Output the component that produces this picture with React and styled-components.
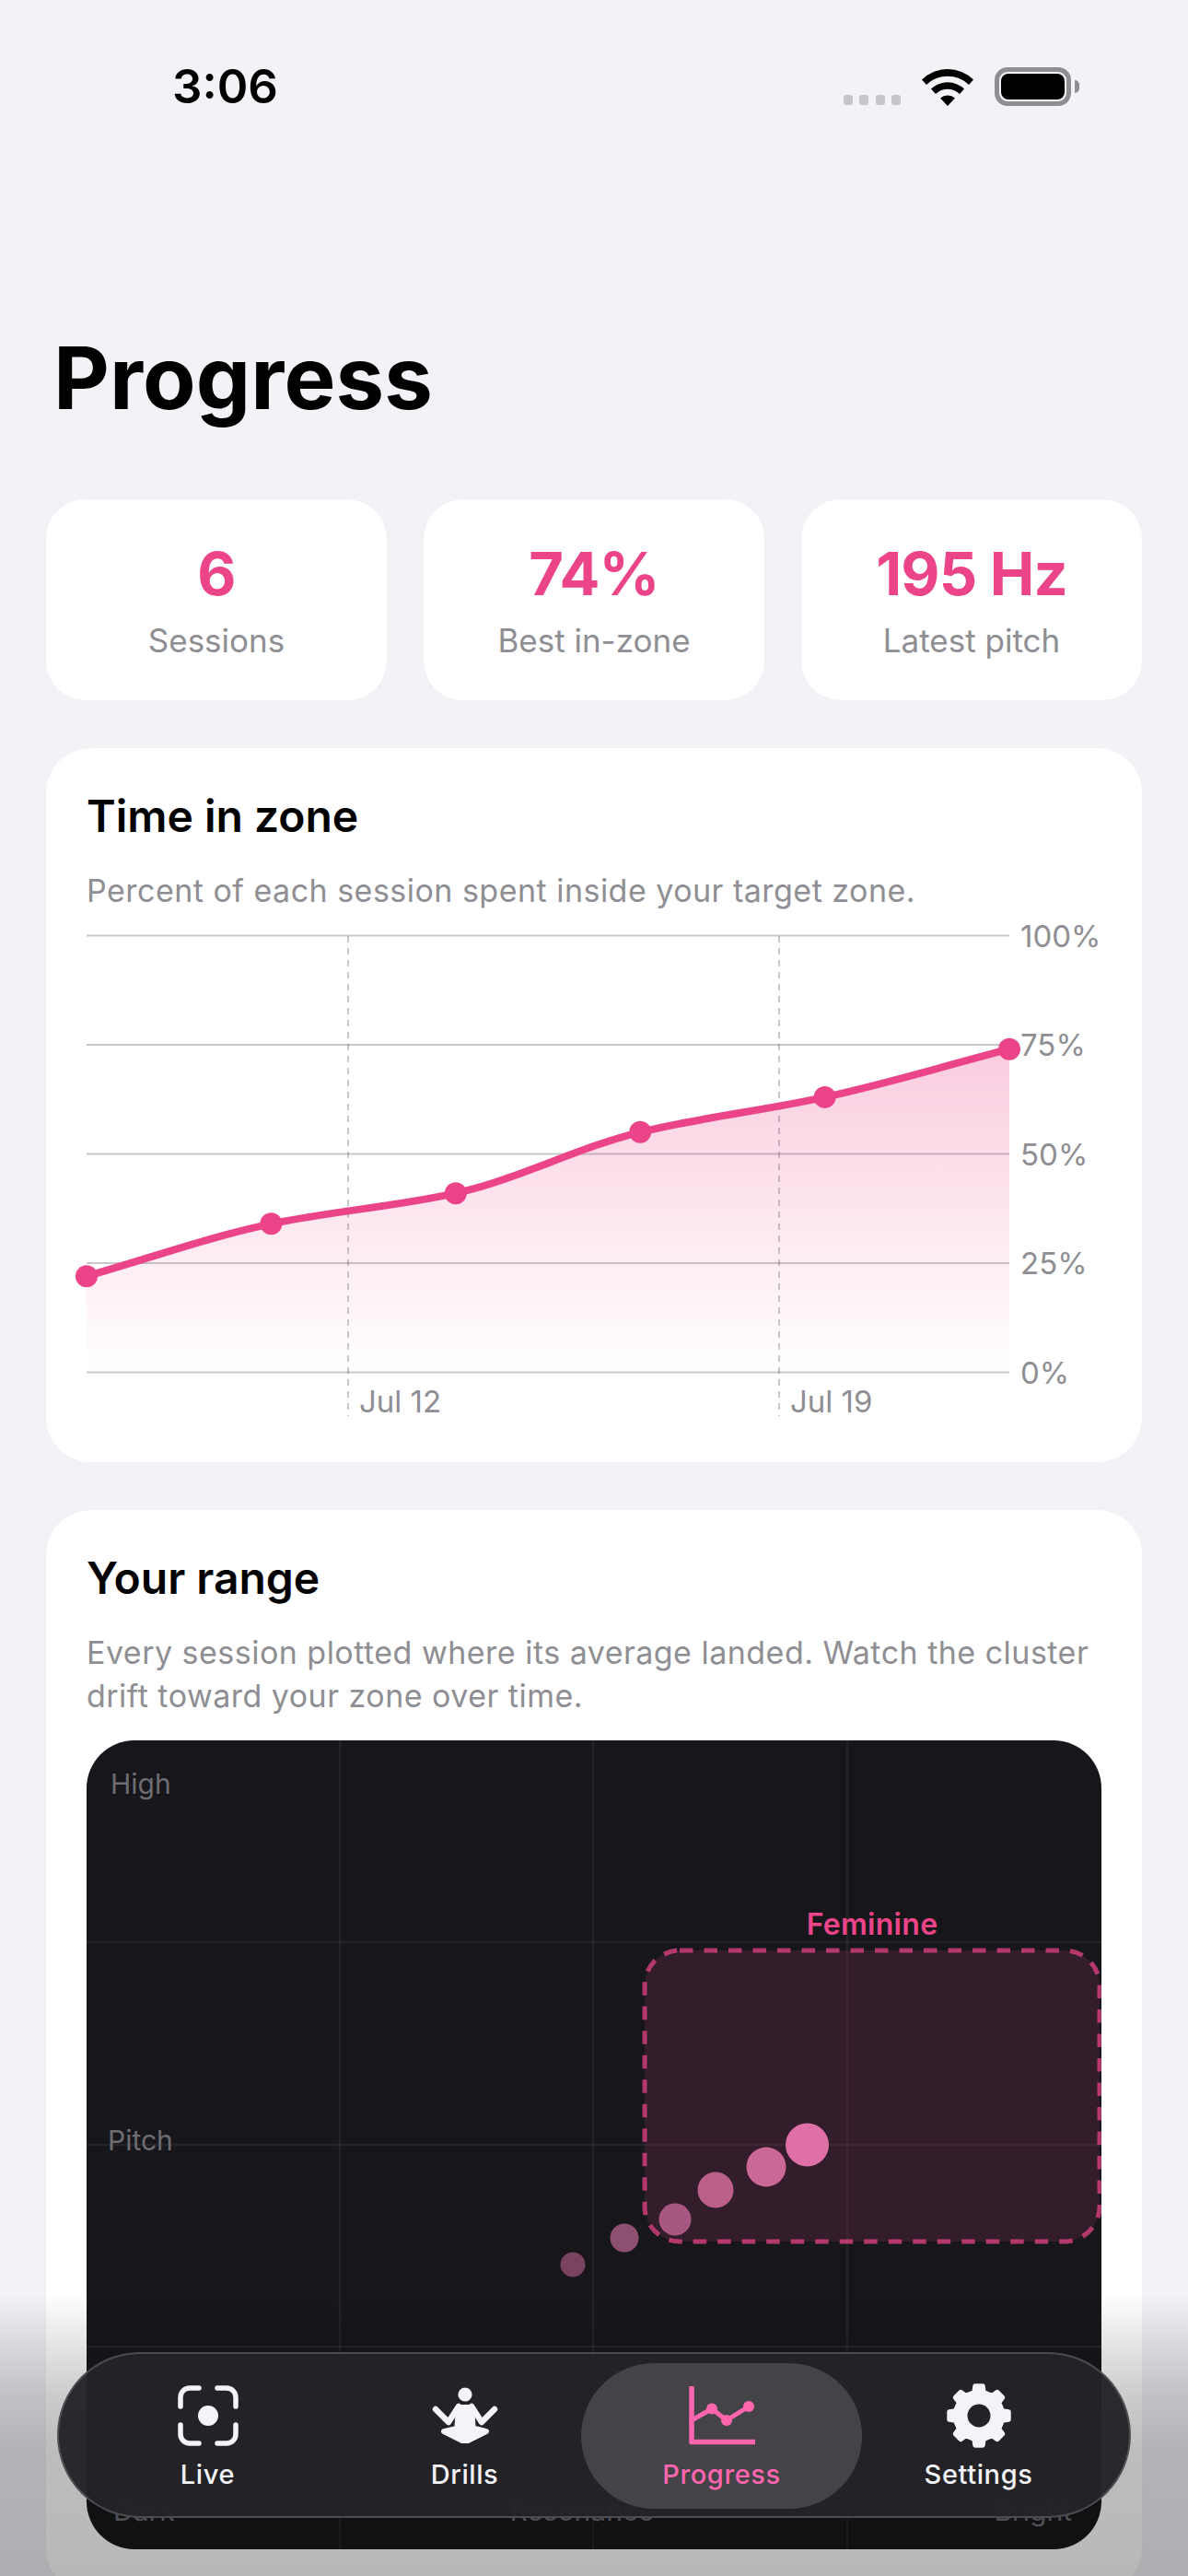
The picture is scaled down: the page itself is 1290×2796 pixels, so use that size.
import React from "react";
import styled, { createGlobalStyle } from "styled-components";

const Global = createGlobalStyle`
  html, body { margin: 0; padding: 0; background: #f2f2f7; }
  body { font-family: Inter, "Noto Sans", sans-serif; -webkit-font-smoothing: antialiased; }
`;

const Screen = styled.div`
  position: relative;
  width: 1290px;
  height: 2796px;
  overflow: hidden;
  background: #f2f2f7;
  box-sizing: border-box;
`;
const StatusBar = styled.div`
  display: flex;
  justify-content: space-between;
  align-items: flex-start;
  height: 180px;
  padding: 64px 127px 0 187px;
  box-sizing: border-box;
`;
const Clock = styled.div`
  font-size: 51px;
  font-weight: 600;
  line-height: 60px;
  color: #000;
`;
const StatusIcons = styled.div`
  display: flex;
  align-items: flex-end;
  padding-top: 9px;
  gap: 23px;
`;
const Signal = styled.div`
  display: flex;
  gap: 7.5px;
  margin-bottom: 1px;
`;
const SignalDot = styled.span`
  width: 10px;
  height: 11px;
  border-radius: 3px;
  background: #c5c5ca;
`;
const Battery = styled.div`
  position: relative;
  width: 83px;
  height: 42px;
  box-sizing: border-box;
  border: 5px solid #8e8e93;
  border-radius: 14px;
  padding: 2px;
  &::after {
    content: "";
    position: absolute;
    right: -14px;
    top: 9px;
    width: 5px;
    height: 14px;
    background: #8e8e93;
    border-radius: 0 5px 5px 0;
  }
`;
const BatteryFill = styled.div`
  width: 100%;
  height: 100%;
  background: #000;
  border-radius: 8px;
`;
const PageTitle = styled.h1`
  margin: 174px 0 0;
  padding: 0 0 0 58px;
  font-size: 94px;
  line-height: 112px;
  font-weight: 700;
  letter-spacing: 0.1px;
  color: #000;
`;
const StatsRow = styled.div`
  display: grid;
  grid-template-columns: repeat(3, 370px);
  gap: 40px;
  padding: 0 50px;
  margin-top: 76px;
`;
const StatCard = styled.div`
  display: flex;
  flex-direction: column;
  align-items: center;
  height: 218px;
  box-sizing: border-box;
  padding-top: 42px;
  background: #fff;
  border-radius: 42px;
  box-shadow: 0 0 2px rgba(0, 0, 0, 0.04);
`;
const StatValue = styled.div`
  font-size: 65px;
  line-height: 78px;
  font-weight: 700;
  letter-spacing: -0.9px;
  color: #ec4488;
`;
const StatLabel = styled.div`
  margin-top: 11px;
  font-size: 35px;
  line-height: 44px;
  color: #8e8e93;
`;
const Card = styled.section`
  margin: 52px 50px 0;
  padding: 45px 44px 47px;
  background: #fff;
  border-radius: 48px;
  box-shadow: 0 0 2px rgba(0, 0, 0, 0.04);
`;
const CardTitle = styled.h2`
  margin: 0;
  font-size: 48px;
  line-height: 58px;
  font-weight: 600;
  color: #000;
`;
const CardSub = styled.p`
  margin: 28px 0 0;
  font-size: 34px;
  line-height: 47px;
  letter-spacing: 0.48px;
  color: #8e8e93;
`;
const ChartSvg = styled.svg`
  display: block;
  overflow: visible;
  margin-top: 10px;
`;
const AxisText = styled.text`
  font-family: Inter, sans-serif;
  font-size: 33px;
  fill: #8e8e93;
`;
const RangePlot = styled.div`
  margin-top: 25px;
  height: 878px;
  overflow: hidden;
  border-radius: 52px;
  background: #17171b;
`;
const RangeSvg = styled.svg`
  display: block;
`;
const PlotText = styled.text`
  font-family: Inter, sans-serif;
  font-size: 30px;
  fill: #6c6c71;
`;
const ZoneText = styled.text`
  font-family: Inter, sans-serif;
  font-size: 32px;
  font-weight: 600;
  letter-spacing: 0.3px;
  fill: #ec4488;
`;
const Fade = styled.div`
  position: absolute;
  left: 0;
  right: 0;
  bottom: 0;
  height: 306px;
  pointer-events: none;
  background: linear-gradient(
    to bottom,
    rgba(0, 0, 0, 0) 0,
    rgba(0, 0, 0, 0.08) 40px,
    rgba(0, 0, 0, 0.2) 110px,
    rgba(0, 0, 0, 0.26) 170px,
    rgba(0, 0, 0, 0.28) 306px
  );
`;
const TabBar = styled.nav`
  position: absolute;
  left: 62px;
  top: 2553px;
  width: 1166px;
  height: 180px;
  box-sizing: border-box;
  padding: 0 22px;
  display: grid;
  grid-template-columns: repeat(4, 279px);
  background: rgba(36, 36, 40, 0.97);
  border: 2px solid rgba(150, 150, 158, 0.34);
  border-radius: 90px;
`;
const Tab = styled.div`
  position: relative;
  display: flex;
  flex-direction: column;
  align-items: center;
  font-size: 29px;
  font-weight: 500;
  letter-spacing: 0.6px;
  color: ${(p) => (p.$active ? "#ff66ad" : "#f4f4f8")};
  &::before {
    content: "";
    display: ${(p) => (p.$active ? "block" : "none")};
    position: absolute;
    left: -13px;
    right: -13px;
    top: 10px;
    height: 158px;
    border-radius: 79px;
    background: #434348;
  }
`;
const TabIcon = styled.div`
  position: relative;
  height: 72px;
  margin-top: 31px;
  display: flex;
  align-items: center;
  justify-content: center;
`;
const TabLabel = styled.span`
  position: relative;
  margin-top: 10px;
  line-height: 36px;
`;

const W = "#f4f4f8";

const Wifi = () => (
  <svg width="56" height="42" viewBox="0 0 56 42">
    <path d="M0 13.5 A40 40 0 0 1 56 13.5 L51 19 A33 33 0 0 0 5 19 Z" fill="#000" />
    <path d="M10 23.5 A26 26 0 0 1 46 23.5 L41 29 A19 19 0 0 0 15 29 Z" fill="#000" />
    <path d="M20 33.5 A12 12 0 0 1 36 33.5 L28 42 Z" fill="#000" />
  </svg>
);

const LiveIcon = () => (
  <svg width="66" height="66" viewBox="0 0 66 66" fill="none" stroke={W} strokeWidth="5.5" strokeLinecap="round">
    <path d="M3 23V13A10 10 0 0 1 13 3H23" />
    <path d="M43 3H53A10 10 0 0 1 63 13V23" />
    <path d="M63 43V53A10 10 0 0 1 53 63H43" />
    <path d="M23 63H13A10 10 0 0 1 3 53V43" />
    <circle cx="33" cy="33" r="11" fill={W} stroke="none" />
  </svg>
);

const DrillsIcon = () => (
  <svg width="72" height="62" viewBox="0 0 72 62">
    <circle cx="36" cy="8" r="7.6" fill={W} />
    <path d="M28 21H44L46 50H26Z" fill={W} stroke={W} strokeWidth="4" strokeLinejoin="round" />
    <path d="M29 21L18 38L4 24M43 21L54 38L68 24" fill="none" stroke={W} strokeWidth="6.5" strokeLinecap="round" strokeLinejoin="round" />
    <path d="M13 48Q36 41 59 48L39 58H33Z" fill={W} stroke={W} strokeWidth="6" strokeLinejoin="round" />
  </svg>
);

const ProgressIcon = () => (
  <svg width="72" height="64" viewBox="0 0 72 64" fill="none" stroke="#ff66ad" strokeLinecap="round" strokeLinejoin="round">
    <path d="M3 2V60.5H71" strokeWidth="5.5" />
    <path d="M3 37L25 24.5L41 37L65 22" strokeWidth="5" />
    <circle cx="25" cy="24.5" r="6" fill="#ff66ad" stroke="none" />
    <circle cx="41" cy="37" r="6" fill="#ff66ad" stroke="none" />
    <circle cx="65" cy="22" r="6" fill="#ff66ad" stroke="none" />
  </svg>
);

function gearPath() {
  const cx = 36, cy = 36, out = 32.5, inn = 26;
  const pts = [];
  for (let i = 0; i < 8; i++) {
    const a = (i * Math.PI) / 4 - Math.PI / 2;
    const s = [[inn, -0.2], [out, -0.13], [out, 0.13], [inn, 0.2]];
    s.forEach(([r, d]) => pts.push([cx + r * Math.cos(a + d), cy + r * Math.sin(a + d)]));
  }
  return "M" + pts.map((p) => p[0].toFixed(2) + " " + p[1].toFixed(2)).join("L") + "Z";
}
const SettingsIcon = () => (
  <svg width="72" height="72" viewBox="0 0 72 72">
    <path d={gearPath()} fill={W} stroke={W} strokeWidth="5" strokeLinejoin="round" />
    <circle cx="36" cy="36" r="12.5" fill="#232327" />
  </svg>
);

const DATA = [22, 34, 41, 55, 63, 74];
const xs = DATA.map((_, i) => 94 + i * 200.4);
const ys = DATA.map((v) => 1489.5 - v * 4.74);
const GRID = [[1015.5, "100%"], [1134, "75%"], [1252.5, "50%"], [1371, "25%"], [1489.5, "0%"]];

function monotonePath() {
  const n = xs.length;
  const d = [];
  for (let i = 0; i < n - 1; i++) d.push((ys[i + 1] - ys[i]) / (xs[i + 1] - xs[i]));
  const m = [d[0]];
  for (let i = 1; i < n - 1; i++) {
    m.push((2 * d[i - 1] * d[i]) / (d[i - 1] + d[i]));
  }
  m.push(d[n - 2]);
  let p = `M${xs[0]} ${ys[0]}`;
  for (let i = 0; i < n - 1; i++) {
    const h = (xs[i + 1] - xs[i]) / 3;
    p += `C${xs[i] + h} ${ys[i] + m[i] * h} ${xs[i + 1] - h} ${ys[i + 1] - m[i + 1] * h} ${xs[i + 1]} ${ys[i + 1]}`;
  }
  return p;
}

const TimeChart = () => {
  const line = monotonePath();
  return (
    <ChartSvg width="1102" height="540" viewBox="94 1000 1102 540">
      <defs>
        <linearGradient id="area" x1="0" y1="0" x2="0" y2="1">
          <stop offset="0" stopColor="#ec4488" stopOpacity="0.27" />
          <stop offset="1" stopColor="#ec4488" stopOpacity="0" />
        </linearGradient>
      </defs>
      <path d={`${line}L1096 1489L94 1489Z`} fill="url(#area)" />
      {GRID.map(([y, t]) => (
        <React.Fragment key={t}>
          <line x1="94" x2="1096" y1={y} y2={y} stroke="#3c3c43" strokeOpacity="0.28" strokeWidth="2" />
          <AxisText x="1108" y={y + 12}>{t}</AxisText>
        </React.Fragment>
      ))}
      {[[378, "Jul 12"], [846, "Jul 19"]].map(([x, t]) => (
        <React.Fragment key={t}>
          <line x1={x} x2={x} y1="1016" y2="1537" stroke="#3c3c43" strokeOpacity="0.28" strokeWidth="2" strokeDasharray="7 6" />
          <AxisText x={x + 12} y="1533">{t}</AxisText>
        </React.Fragment>
      ))}
      <path d={line} fill="none" stroke="#ec4488" strokeWidth="8" strokeLinecap="round" />
      {xs.map((x, i) => (
        <circle key={x} cx={x} cy={ys[i]} r="12" fill="#ec4488" />
      ))}
    </ChartSvg>
  );
};

const DOTS = [
  [622, 2458, 13.5, "#7a4460"],
  [678, 2429, 15.5, "#8e5070"],
  [733, 2409, 17.5, "#a85880"],
  [777, 2377, 19.5, "#bb6088"],
  [832, 2352, 21.5, "#cc6898"],
  [876.5, 2328, 23.5, "#e070a8"],
];

const RangeChart = () => (
  <RangeSvg width="1102" height="878" viewBox="94 1889 1102 878">
    {[369, 644, 920].map((x) => (
      <line key={x} x1={x} x2={x} y1="1889" y2="2767" stroke="#fff" strokeOpacity="0.06" strokeWidth="2.5" />
    ))}
    {[2108, 2328, 2547].map((y) => (
      <line key={y} x1="94" x2="1196" y1={y} y2={y} stroke="#fff" strokeOpacity="0.06" strokeWidth="2.5" />
    ))}
    <rect x="700" y="2117" width="494" height="316" rx="38" fill="#ec4488" fillOpacity="0.14" stroke="#ec4488" strokeOpacity="0.72" strokeWidth="5" strokeDasharray="14.5 12" />
    <ZoneText x="947" y="2100" textAnchor="middle">Feminine</ZoneText>
    <PlotText x="120" y="1947">High</PlotText>
    <PlotText x="117" y="2334">Pitch</PlotText>
    <PlotText x="123" y="2736">Dark</PlotText>
    <PlotText x="632" y="2736" textAnchor="middle">Resonance</PlotText>
    <PlotText x="1164" y="2736" textAnchor="end">Bright</PlotText>
    {DOTS.map(([x, y, r, c]) => (
      <circle key={x} cx={x} cy={y} r={r} fill={c} />
    ))}
  </RangeSvg>
);

export default function App() {
  return (
    <Screen>
      <Global />
      <StatusBar>
        <Clock>3:06</Clock>
        <StatusIcons>
          <Signal>
            <SignalDot /><SignalDot /><SignalDot /><SignalDot />
          </Signal>
          <Wifi />
          <Battery><BatteryFill /></Battery>
        </StatusIcons>
      </StatusBar>
      <PageTitle>Progress</PageTitle>
      <StatsRow>
        <StatCard><StatValue>6</StatValue><StatLabel>Sessions</StatLabel></StatCard>
        <StatCard><StatValue>74%</StatValue><StatLabel>Best in-zone</StatLabel></StatCard>
        <StatCard><StatValue>195 Hz</StatValue><StatLabel>Latest pitch</StatLabel></StatCard>
      </StatsRow>
      <Card>
        <CardTitle>Time in zone</CardTitle>
        <CardSub>Percent of each session spent inside your target zone.</CardSub>
        <TimeChart />
      </Card>
      <Card>
        <CardTitle>Your range</CardTitle>
        <CardSub>Every session plotted where its average landed. Watch the cluster drift toward your zone over time.</CardSub>
        <RangePlot><RangeChart /></RangePlot>
      </Card>
      <Fade />
      <TabBar>
        <Tab><TabIcon><LiveIcon /></TabIcon><TabLabel>Live</TabLabel></Tab>
        <Tab><TabIcon><DrillsIcon /></TabIcon><TabLabel>Drills</TabLabel></Tab>
        <Tab $active><TabIcon><ProgressIcon /></TabIcon><TabLabel>Progress</TabLabel></Tab>
        <Tab><TabIcon><SettingsIcon /></TabIcon><TabLabel>Settings</TabLabel></Tab>
      </TabBar>
    </Screen>
  );
}
